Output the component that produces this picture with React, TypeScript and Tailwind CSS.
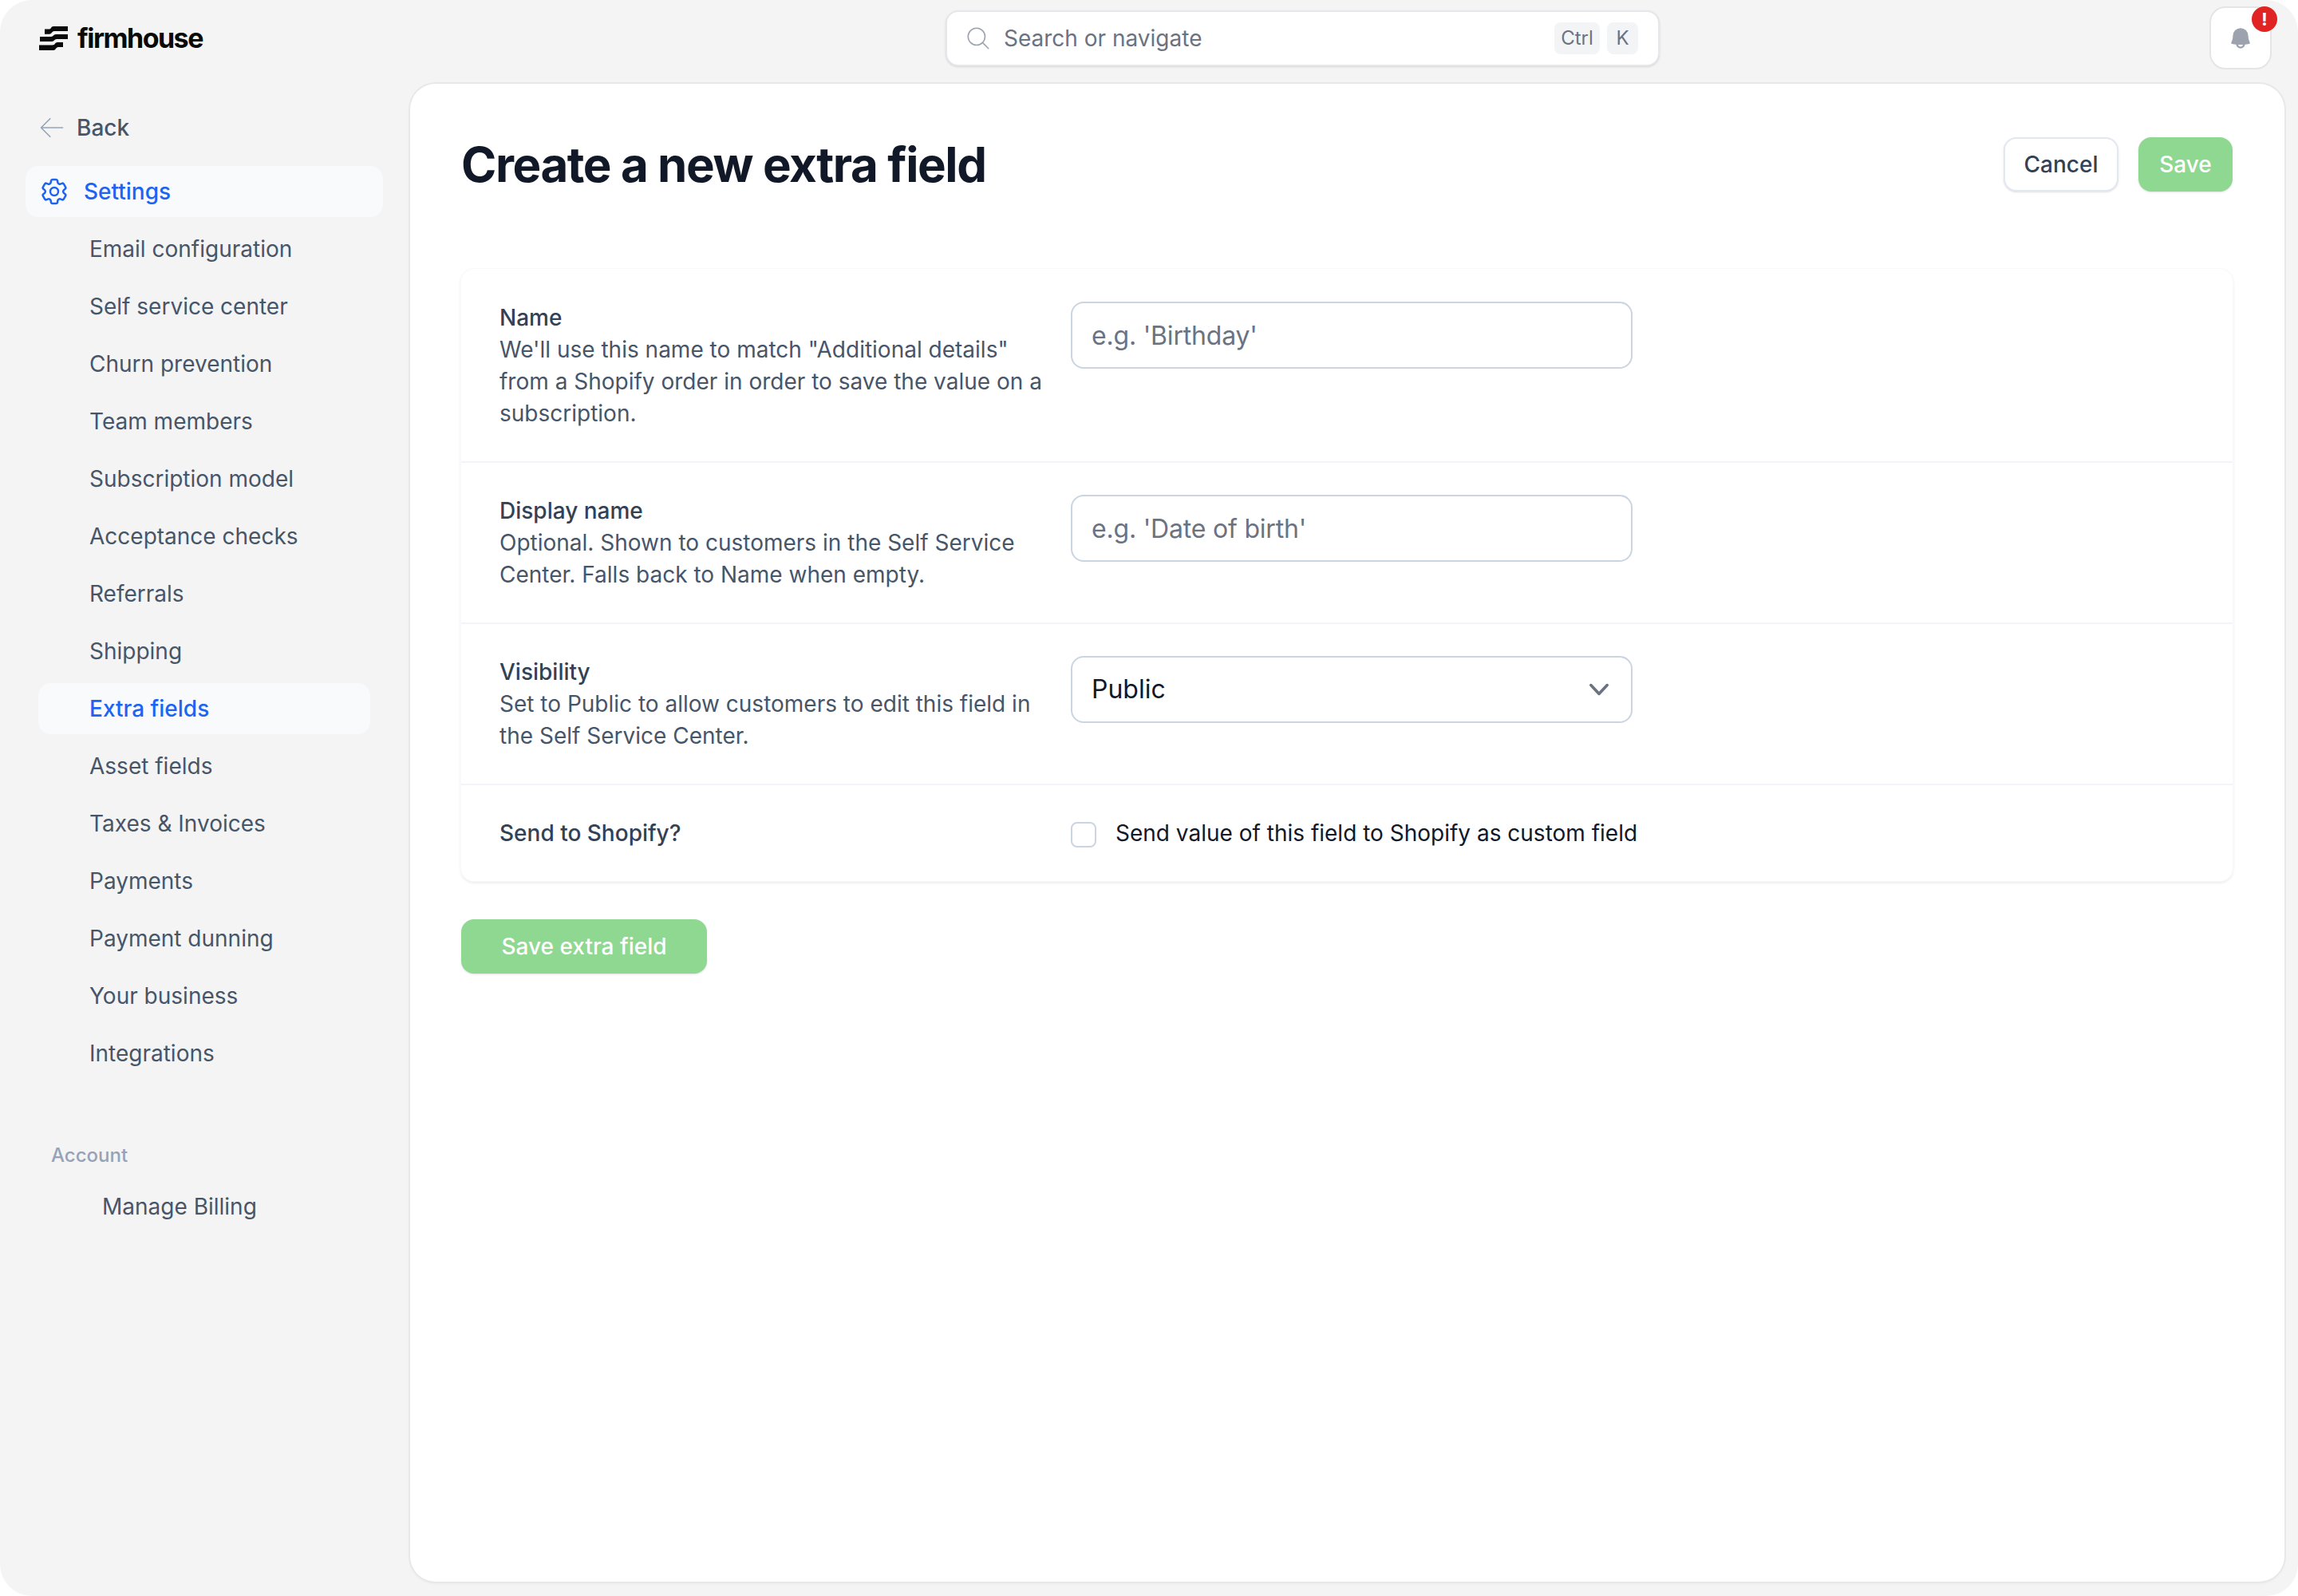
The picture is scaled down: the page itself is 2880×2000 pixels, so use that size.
import React from "react";

const items = [
  "Email configuration",
  "Self service center",
  "Churn prevention",
  "Team members",
  "Subscription model",
  "Acceptance checks",
  "Referrals",
  "Shipping",
  "Extra fields",
  "Asset fields",
  "Taxes & Invoices",
  "Payments",
  "Payment dunning",
  "Your business",
  "Integrations",
];

function Logo() {
  return (
    <svg width="36" height="30" viewBox="0 0 36 30" fill="#0a0a0a">
      <path d="M7 3.5H13C15 3.5 15 0 18 0H36V6H19C16 6 16 9.7 13 9.7H7Z" />
      <path d="M1 13H15C18 13 18 10 21 10H36V16H22C19 16 19 19 16 19H1Z" />
      <path d="M0 23.5H17C20 23.5 20 20 23 20H30V26H24C21 26 21 30 18 30H0Z" />
    </svg>
  );
}

function Row({
  label,
  desc,
  children,
  className,
}: {
  label: string;
  desc?: React.ReactNode;
  children: React.ReactNode;
  className: string;
}) {
  return (
    <div className={`flex gap-[30px] px-[48px] ${className}`}>
      <div className="w-[686px] shrink-0 text-[28px] leading-[40px] text-[#475569]">
        <div className="font-medium text-[#334155]">{label}</div>
        {desc}
      </div>
      {children}
    </div>
  );
}

export default function App() {
  return (
    <div
      className="h-[2000px] w-[2880px] bg-white text-[28px] leading-[40px]"
      style={{ fontFamily: "Inter, 'Noto Sans', sans-serif" }}
    >
      <div className="relative flex h-full flex-col overflow-hidden rounded-[40px] bg-[#f4f4f4]">
        <header className="relative flex h-[105px] shrink-0 items-start">
          <div className="absolute left-[49px] top-[33px] flex items-center gap-[12px]">
            <Logo />
            <span className="text-[34px] font-bold leading-[30px] tracking-[-0.045em] text-[#0a0a0a]">firmhouse</span>
          </div>
          <div className="ml-[1185px] mt-[13px] flex h-[70px] w-[895px] items-center rounded-[16px] border-2 border-[#e5e7eb] bg-white pl-[22px] pr-[25px] shadow-sm">
            <svg className="h-[34px] w-[34px] text-[#9ca3af]" viewBox="0 0 24 24" fill="none" stroke="currentColor" strokeWidth={1.1} strokeLinecap="round" strokeLinejoin="round">
              <path d="m21 21-5.197-5.197m0 0A7.5 7.5 0 1 0 5.196 5.196a7.5 7.5 0 0 0 10.607 10.607Z" />
            </svg>
            <span className="ml-[15px] flex-1 text-[#6b7280]">Search or navigate</span>
            <span className="flex h-[40px] w-[57px] items-center justify-center rounded-[8px] bg-[#f3f4f6] text-[24px] text-[#6b7280]">Ctrl</span>
            <span className="ml-[9px] flex h-[40px] w-[39px] items-center justify-center rounded-[8px] bg-[#f3f4f6] text-[24px] text-[#6b7280]">K</span>
          </div>
          <div className="relative ml-[689px] mt-[8px] flex h-[79px] w-[78px] items-center justify-center rounded-[20px] border-2 border-[#e5e5e5] bg-white">
            <svg width="32" height="32" viewBox="0 0 20 20" fill="#9ca3af">
              <path fillRule="evenodd" clipRule="evenodd" d="M10 2a6 6 0 00-6 6c0 1.887-.454 3.665-1.257 5.234a.75.75 0 00.515 1.076 32.91 32.91 0 003.256.508 3.5 3.5 0 006.972 0 32.903 32.903 0 003.256-.508.75.75 0 00.515-1.076A11.448 11.448 0 0116 8a6 6 0 00-6-6zM8.05 14.943a33.54 33.54 0 003.9 0 2 2 0 01-3.9 0z" />
            </svg>
            <span className="absolute -right-[9px] -top-[2px] flex h-[32px] w-[32px] items-center justify-center rounded-full bg-[#e02424] text-[22px] font-bold text-white">!</span>
          </div>
        </header>
        <div className="flex min-h-0 flex-1">
          <aside className="w-[514px] shrink-0 pl-[32px] pr-[34px]">
            <div className="mt-[35px] flex h-[40px] items-center pl-[15px] font-medium text-[#475569]">
              <svg className="h-[36px] w-[36px] text-[#94a3b8]" viewBox="0 0 24 24" fill="none" stroke="currentColor" strokeWidth={1.1} strokeLinecap="round" strokeLinejoin="round">
                <path d="M10.5 19.5 3 12m0 0 7.5-7.5M3 12h18" />
              </svg>
              <span className="ml-[13px]">Back</span>
            </div>
            <div className="mt-[28px] flex h-[64px] items-center rounded-[16px] bg-[#f8fafc] pl-[16px] font-medium text-[#1d64f2]">
              <svg className="h-[40px] w-[40px]" viewBox="0 0 24 24" fill="none" stroke="currentColor" strokeWidth={1.5} strokeLinecap="round" strokeLinejoin="round">
                <path d="M9.594 3.94c.09-.542.56-.94 1.11-.94h2.593c.55 0 1.02.398 1.11.94l.213 1.281c.063.374.313.686.645.87.074.04.147.083.22.127.325.196.72.257 1.075.124l1.217-.456a1.125 1.125 0 0 1 1.37.49l1.296 2.247a1.125 1.125 0 0 1-.26 1.431l-1.003.827c-.293.241-.438.613-.43.992a7.723 7.723 0 0 1 0 .255c-.008.378.137.75.43.991l1.004.827c.424.35.534.955.26 1.43l-1.298 2.247a1.125 1.125 0 0 1-1.369.491l-1.217-.456c-.355-.133-.75-.072-1.076.124a6.47 6.47 0 0 1-.22.128c-.331.183-.581.495-.644.869l-.213 1.281c-.09.543-.56.94-1.11.94h-2.594c-.55 0-1.019-.398-1.11-.94l-.213-1.281c-.062-.374-.312-.686-.644-.87a6.52 6.52 0 0 1-.22-.127c-.325-.196-.72-.257-1.076-.124l-1.217.456a1.125 1.125 0 0 1-1.369-.49l-1.297-2.247a1.125 1.125 0 0 1 .26-1.431l1.004-.827c.292-.24.437-.613.43-.991a6.932 6.932 0 0 1 0-.255c.007-.38-.138-.751-.43-.992l-1.004-.827a1.125 1.125 0 0 1-.26-1.43l1.297-2.247a1.125 1.125 0 0 1 1.37-.491l1.216.456c.356.133.751.072 1.076-.124.072-.044.146-.086.22-.128.332-.183.582-.495.644-.869l.214-1.28Z" />
                <path d="M15 12a3 3 0 1 1-6 0 3 3 0 0 1 6 0Z" />
              </svg>
              <span className="ml-[17px]">Settings</span>
            </div>
            <nav className="mt-[8px] flex flex-col gap-[8px] px-[16px]">
              {items.map((t) => (
                <div
                  key={t}
                  className={`flex h-[64px] items-center rounded-[16px] pl-[64px] ${t === "Extra fields" ? "bg-[#f8fafc] font-medium text-[#1d64f2]" : "text-[#475569]"}`}
                >
                  {t}
                </div>
              ))}
            </nav>
            <div className="ml-[32px] mt-[80px] text-[24px] font-medium leading-[32px] text-[#94a3b8]">Account</div>
            <div className="ml-[96px] mt-[28px] text-[#475569]">Manage Billing</div>
          </aside>
          <main className="mb-[18px] mr-[17px] flex-1 rounded-[32px] bg-white pl-[64px] pr-[65px] shadow-[0_0_0_2px_#e8e8e8,0_2px_4px_rgba(0,0,0,0.05)]">
            <div className="flex h-[232px] items-start justify-between pt-[67px]">
              <h1 className="-mt-[2px] text-[60px] font-bold leading-[72px] tracking-[-1.42px] text-[#111827]">Create a new extra field</h1>
              <div className="flex gap-[25px]">
                <button className="h-[68px] w-[144px] rounded-[16px] border-2 border-[#e2e8f0] bg-white font-medium text-[#334155] shadow-sm">Cancel</button>
                <button className="h-[68px] w-[118px] rounded-[16px] bg-[#8fd891] font-medium text-white shadow-sm">Save</button>
              </div>
            </div>
            <div className="rounded-[16px] bg-white shadow-[0_0_0_1px_#f8f8f8,0_2px_4px_rgba(0,0,0,0.1)]">
              <Row
                className="border-b-2 border-[#f1f5f9] pb-[40px] pt-[41px]"
                label="Name"
                desc={<p>We'll use this name to match "Additional details" from a Shopify order in order to save the value on a subscription.</p>}
              >
                <input
                  readOnly
                  placeholder="e.g. 'Birthday'"
                  className="h-[84px] w-[704px] rounded-[16px] border-2 border-[#cbd5e1] px-[24px] text-[32px] tracking-[-0.2px] placeholder:text-[#6b7280]"
                />
              </Row>
              <Row
                className="border-b-2 border-[#f1f5f9] py-[40px]"
                label="Display name"
                desc={<p>Optional. Shown to customers in the Self Service Center. Falls back to Name when empty.</p>}
              >
                <input
                  readOnly
                  placeholder="e.g. 'Date of birth'"
                  className="h-[84px] w-[704px] rounded-[16px] border-2 border-[#cbd5e1] px-[24px] text-[32px] tracking-[-0.2px] placeholder:text-[#6b7280]"
                />
              </Row>
              <Row
                className="border-b-2 border-[#f1f5f9] py-[40px]"
                label="Visibility"
                desc={<p>Set to Public to allow customers to edit this field in the Self Service Center.</p>}
              >
                <div className="flex h-[84px] w-[704px] items-center justify-between rounded-[16px] border-2 border-[#cbd5e1] pl-[24px] pr-[16px] text-[32px] text-[#111827]">
                  <span>Public</span>
                  <svg className="h-[48px] w-[48px]" viewBox="0 0 20 20" fill="#6b7280">
                    <path fillRule="evenodd" clipRule="evenodd" d="M5.23 7.21a.75.75 0 011.06.02L10 11.168l3.71-3.938a.75.75 0 111.08 1.04l-4.25 4.5a.75.75 0 01-1.08 0l-4.25-4.5a.75.75 0 01.02-1.06z" />
                  </svg>
                </div>
              </Row>
              <Row className="py-[40px]" label="Send to Shopify?">
                <div className="flex items-start">
                  <span className="mt-[6px] block h-[32px] w-[32px] rounded-[8px] border-2 border-[#cbd5e1] bg-white" />
                  <span className="ml-[24px] text-[#111827]">Send value of this field to Shopify as custom field</span>
                </div>
              </Row>
            </div>
            <button className="mt-[48px] h-[68px] w-[308px] rounded-[16px] bg-[#8fd891] font-medium text-white shadow-sm">Save extra field</button>
          </main>
        </div>
      </div>
    </div>
  );
}
